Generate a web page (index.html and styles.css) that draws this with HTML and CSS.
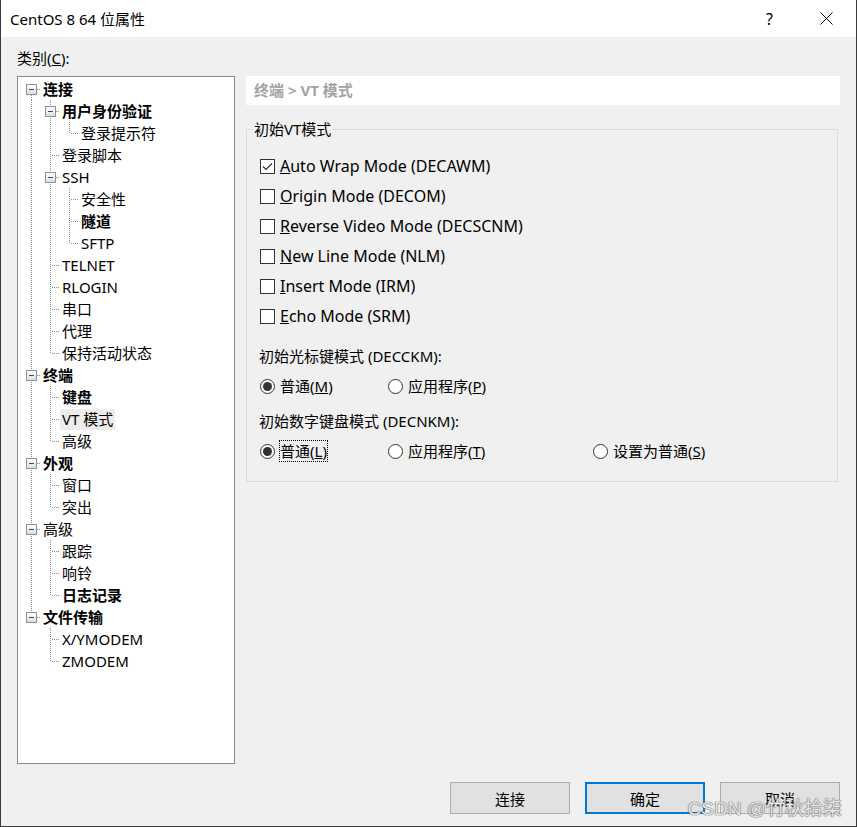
FILE: index.html
```html
<!DOCTYPE html>
<html lang="zh-CN">
<head>
<meta charset="utf-8">
<title>CentOS 8 64 位属性</title>
<link rel="stylesheet" href="styles.css">
</head>
<body>
<div class="window">
  <div class="titlebar">
    <span class="title">CentOS 8 64 位属性</span>
    <span class="help">?</span>
    <svg class="close" width="13" height="13" viewBox="0 0 13 13"><path d="M0.5 0.5 L12.5 12.5 M12.5 0.5 L0.5 12.5" stroke="#000" stroke-width="1" fill="none"/></svg>
  </div>
  <div class="content">
    <div class="cat-label">类别(<u>C</u>):</div>
    <div class="main">
      <div class="tree">
        <div class="row"><span class="c ex first"><i class="box"></i></span><span class="txt b">连接</span></div>
        <div class="row"><span class="c v"></span><span class="c ex"><i class="box"></i></span><span class="txt b">用户身份验证</span></div>
        <div class="row"><span class="c v"></span><span class="c v"></span><span class="c l"></span><span class="txt">登录提示符</span></div>
        <div class="row"><span class="c v"></span><span class="c t"></span><span class="txt">登录脚本</span></div>
        <div class="row"><span class="c v"></span><span class="c ex"><i class="box"></i></span><span class="txt">SSH</span></div>
        <div class="row"><span class="c v"></span><span class="c v"></span><span class="c t"></span><span class="txt">安全性</span></div>
        <div class="row"><span class="c v"></span><span class="c v"></span><span class="c t"></span><span class="txt b">隧道</span></div>
        <div class="row"><span class="c v"></span><span class="c v"></span><span class="c l"></span><span class="txt">SFTP</span></div>
        <div class="row"><span class="c v"></span><span class="c t"></span><span class="txt">TELNET</span></div>
        <div class="row"><span class="c v"></span><span class="c t"></span><span class="txt">RLOGIN</span></div>
        <div class="row"><span class="c v"></span><span class="c t"></span><span class="txt">串口</span></div>
        <div class="row"><span class="c v"></span><span class="c t"></span><span class="txt">代理</span></div>
        <div class="row"><span class="c v"></span><span class="c l"></span><span class="txt">保持活动状态</span></div>
        <div class="row"><span class="c ex"><i class="box"></i></span><span class="txt b">终端</span></div>
        <div class="row"><span class="c v"></span><span class="c t"></span><span class="txt b">键盘</span></div>
        <div class="row"><span class="c v"></span><span class="c t"></span><span class="txt sel">VT 模式</span></div>
        <div class="row"><span class="c v"></span><span class="c l"></span><span class="txt">高级</span></div>
        <div class="row"><span class="c ex"><i class="box"></i></span><span class="txt b">外观</span></div>
        <div class="row"><span class="c v"></span><span class="c t"></span><span class="txt">窗口</span></div>
        <div class="row"><span class="c v"></span><span class="c l"></span><span class="txt">突出</span></div>
        <div class="row"><span class="c ex"><i class="box"></i></span><span class="txt">高级</span></div>
        <div class="row"><span class="c v"></span><span class="c t"></span><span class="txt">跟踪</span></div>
        <div class="row"><span class="c v"></span><span class="c t"></span><span class="txt">响铃</span></div>
        <div class="row"><span class="c v"></span><span class="c l"></span><span class="txt b">日志记录</span></div>
        <div class="row"><span class="c ex last"><i class="box"></i></span><span class="txt b">文件传输</span></div>
        <div class="row"><span class="c"></span><span class="c t"></span><span class="txt">X/YMODEM</span></div>
        <div class="row"><span class="c"></span><span class="c l"></span><span class="txt">ZMODEM</span></div>
      </div>
      <div class="panel">
        <div class="header">终端 &gt; VT 模式</div>
        <fieldset class="group">
          <legend>初始VT模式</legend>
          <div class="checks">
            <div class="opt"><span class="cb checked"><svg width="13" height="13" viewBox="0 0 13 13"><path d="M2 6.5 L5 9.5 L11 3.5" stroke="#333" stroke-width="1.2" fill="none"/></svg></span><span class="lbl"><u>A</u>uto Wrap Mode (DECAWM)</span></div>
            <div class="opt"><span class="cb"></span><span class="lbl"><u>O</u>rigin Mode (DECOM)</span></div>
            <div class="opt"><span class="cb"></span><span class="lbl"><u>R</u>everse Video Mode (DECSCNM)</span></div>
            <div class="opt"><span class="cb"></span><span class="lbl"><u>N</u>ew Line Mode (NLM)</span></div>
            <div class="opt"><span class="cb"></span><span class="lbl"><u>I</u>nsert Mode (IRM)</span></div>
            <div class="opt"><span class="cb"></span><span class="lbl"><u>E</u>cho Mode (SRM)</span></div>
          </div>
          <div class="sub first">初始光标键模式 (DECCKM):</div>
          <div class="radios">
            <div class="opt"><span class="rb on"></span><span class="lbl">普通(<u>M</u>)</span></div>
            <div class="opt"><span class="rb"></span><span class="lbl">应用程序(<u>P</u>)</span></div>
          </div>
          <div class="sub">初始数字键盘模式 (DECNKM):</div>
          <div class="radios">
            <div class="opt"><span class="rb on"></span><span class="lbl focus">普通(<u>L</u>)</span></div>
            <div class="opt"><span class="rb"></span><span class="lbl">应用程序(<u>T</u>)</span></div>
            <div class="opt"><span class="rb"></span><span class="lbl">设置为普通(<u>S</u>)</span></div>
          </div>
        </fieldset>
      </div>
    </div>
    <div class="buttons">
      <button class="btn">连接</button>
      <button class="btn default">确定</button>
      <button class="btn">取消</button>
    </div>
  </div>
  <div class="watermark">CSDN @竹秋拾柒</div>
</div>
</body>
</html>
```
FILE: styles.css
```css
* { box-sizing: border-box; }
html, body { margin: 0; padding: 0; }
body {
  width: 857px;
  height: 827px;
  overflow: hidden;
  background: #f0f0f0;
  font-family: "Noto Sans", "Noto Sans CJK SC", sans-serif;
  font-size: 15px;
  color: #000;
}
.window {
  position: relative;
  width: 857px;
  height: 827px;
  background: #f0f0f0;
  border-left: 1px solid #3a3a3a;
  border-right: 1px solid #3a3a3a;
  border-bottom: 1px solid #3a3a3a;
  display: flex;
  flex-direction: column;
}
.titlebar {
  height: 37px;
  background: #fff;
  display: flex;
  align-items: center;
  padding-left: 9px;
  flex: none;
}
.title { flex: 1; font-size: 15px; line-height: 20px; }
.help { font-size: 16px; line-height: 20px; margin-right: 47px; }
.close { margin-right: 23px; display: block; }
.content {
  flex: 1;
  padding: 0 16px;
  display: flex;
  flex-direction: column;
}
.cat-label {
  height: 39px;
  padding-top: 11px;
  line-height: 20px;
}
.main {
  height: 688px;
  display: flex;
  gap: 11px;
}
.tree {
  width: 218px;
  flex: none;
  background: #fff;
  border: 1px solid #828790;
  padding: 1px 0 0 4px;
}
.row {
  height: 22px;
  display: flex;
  align-items: center;
}
.c {
  width: 19px;
  height: 22px;
  flex: none;
  display: flex;
  align-items: center;
  padding-left: 4px;
  --dv: repeating-linear-gradient(to bottom, #8c8c8c 0 1px, transparent 1px 2px);
  --dh: repeating-linear-gradient(to right, #8c8c8c 0 1px, transparent 1px 2px);
}
.v { background: var(--dv) 9px 0 / 1px 22px no-repeat; }
.t { background: var(--dh) 11px 11px / 8px 1px no-repeat, var(--dv) 9px 0 / 1px 22px no-repeat; }
.l { background: var(--dh) 11px 11px / 8px 1px no-repeat, var(--dv) 9px 0 / 1px 11px no-repeat; }
.ex { background: var(--dh) 15px 11px / 4px 1px no-repeat, var(--dv) 9px 0 / 1px 22px no-repeat; }
.ex.first { background: var(--dh) 15px 11px / 4px 1px no-repeat, var(--dv) 9px 11px / 1px 11px no-repeat; }
.ex.last { background: var(--dh) 15px 11px / 4px 1px no-repeat, var(--dv) 9px 0 / 1px 11px no-repeat; }
.box {
  width: 11px;
  height: 11px;
  border: 1px solid #8f9092;
  background: linear-gradient(#ffffff, #dedede);
  display: flex;
  align-items: center;
  justify-content: center;
}
.box::before {
  content: "";
  width: 5px;
  height: 1px;
  background: #2e4a8c;
}
.txt {
  padding: 0 2px;
  line-height: 21px;
  height: 21px;
  white-space: nowrap;
}
.txt.b { font-weight: bold; }
.txt.sel { background: #ececec; }
.panel {
  flex: 1;
  display: flex;
  flex-direction: column;
}
.header {
  height: 29px;
  background: #fff;
  color: #a3a3a3;
  font-weight: bold;
  padding-left: 8px;
  line-height: 29px;
}
.group {
  margin: 14px 2px 0 0;
  padding: 0 0 0 6px;
  border: 1px solid #dcdcdc;
  height: 363px;
  min-width: 0;
}
.group legend {
  padding: 0 1px;
  line-height: 20px;
  height: 20px;
}
.checks {
  padding-top: 12px;
  padding-left: 7px;
}
.checks .lbl { font-size: 16px; }
.opt {
  height: 30px;
  display: flex;
  align-items: center;
}
.cb {
  width: 15px;
  height: 15px;
  border: 1px solid #333;
  background: #fff;
  margin-right: 4px;
  display: flex;
  align-items: center;
  justify-content: center;
  flex: none;
}
.cb svg { display: block; }
.lbl {
  border: 1px dotted transparent;
  padding: 0 0;
  line-height: 20px;
  white-space: nowrap;
}
.lbl.focus { border-color: #000; }
.sub {
  margin-left: 6px;
  height: 20px;
  line-height: 20px;
  margin-top: 10px;
}
.sub.first { margin-top: 15px; }
.radios {
  margin-top: 5px;
  padding-left: 7px;
  display: grid;
  grid-template-columns: 128px 205px auto;
}
.rb {
  width: 15px;
  height: 15px;
  border: 1px solid #333;
  border-radius: 50%;
  background: #fff;
  margin-right: 4px;
  display: flex;
  align-items: center;
  justify-content: center;
  flex: none;
}
.rb.on::before {
  content: "";
  width: 9px;
  height: 9px;
  border-radius: 50%;
  background: #333;
}
.buttons {
  margin-top: 18px;
  display: flex;
  justify-content: flex-end;
  gap: 15px;
}
.btn {
  width: 120px;
  height: 32px;
  background: #e1e1e1;
  border: 1px solid #adadad;
  font-family: inherit;
  font-size: 15px;
  color: #000;
  padding: 0;
}
.btn.default { border: 2px solid #0078d7; }
.watermark {
  position: absolute;
  right: 14px;
  bottom: 6px;
  font-size: 19px;
  font-family: "Liberation Sans", "Noto Sans CJK SC", sans-serif;
  color: rgba(255,255,255,0.85);
  text-shadow: 0 0 1px #6d6d6d, 0 0 1px #6d6d6d, 0 0 1px #6d6d6d;
  white-space: nowrap;
}
```
